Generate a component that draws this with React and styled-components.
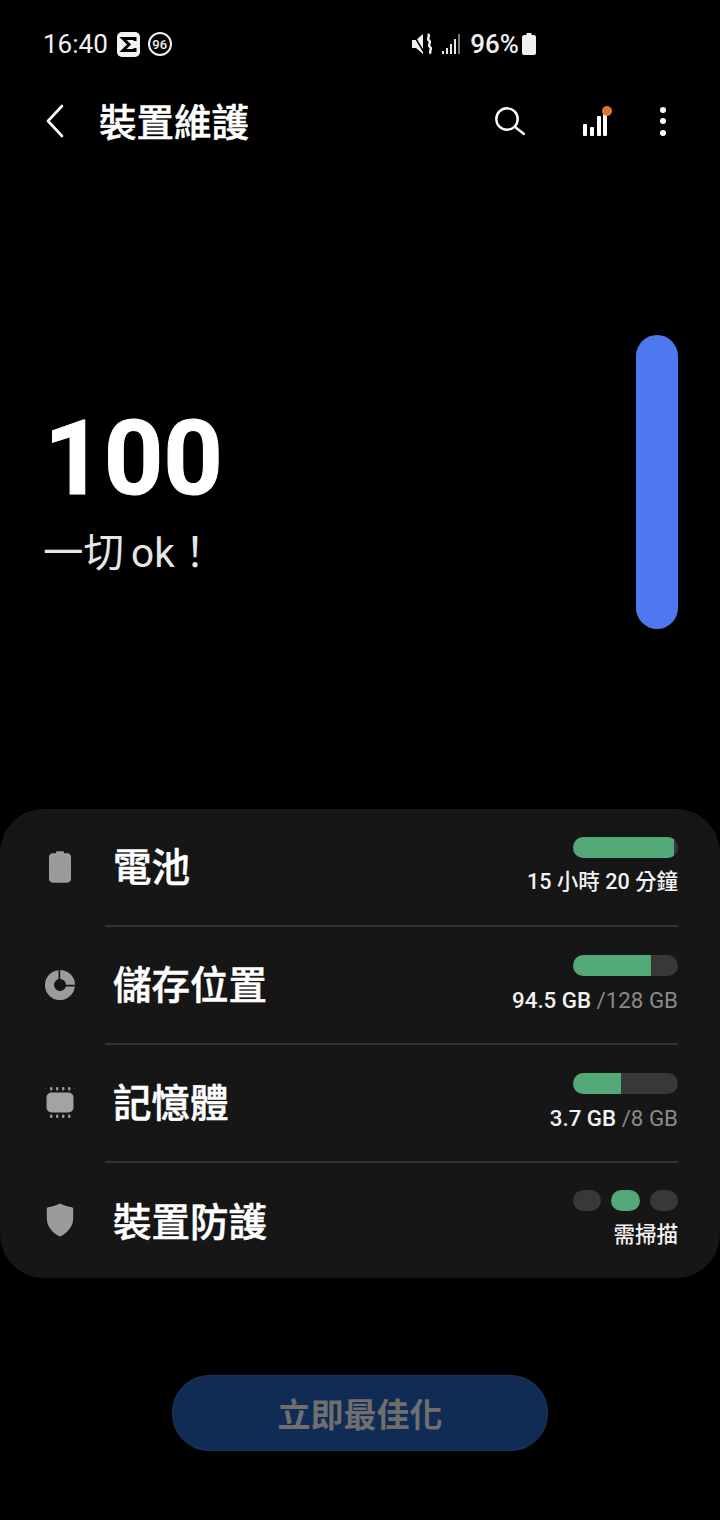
import React from 'react'
import styled, { createGlobalStyle } from 'styled-components'

const GlobalStyle = createGlobalStyle`
  html, body {
    margin: 0;
    padding: 0;
    background: #000;
  }
  body {
    font-family: Roboto, "Noto Sans CJK TC", sans-serif;
    color: #fff;
  }
`

const items = [
  { name: '電池', icon: 'battery', bar: 96, main: '15 小時 20 分鐘', small: true },
  { name: '儲存位置', icon: 'storage', bar: 74, main: '94.5 GB', sub: '/128 GB' },
  { name: '記憶體', icon: 'memory', bar: 46, main: '3.7 GB', sub: '/8 GB' },
  { name: '裝置防護', icon: 'shield', main: '需掃描', small: true },
]

const RowIcon = ({ type }) => {
  if (type === 'battery') {
    return (
      <svg width="30" height="36" viewBox="0 0 30 36">
        <path fill="#9b9b9b" d="M11 3.300c0-.6.5-1 1-1h6c.5 0 1 .4 1 1v1h3.400c2 0 3.600 1.500 3.600 3.600v22.200c0 2-1.600 3.600-3.600 3.600H7.600c-2 0-3.600-1.600-3.600-3.600V7.900c0-2.100 1.600-3.600 3.600-3.600H11z" />
      </svg>
    )
  }
  if (type === 'storage') {
    return (
      <svg width="30" height="30" viewBox="0 0 30 30">
        <path fill="#9b9b9b" d="M13.500.2v8.900a6 6 0 1 0 7.400 7.300h8.900A15 15 0 1 1 13.500.2z" />
        <path fill="#9b9b9b" d="M15.200 0A15 15 0 0 1 30 14.700h-9a6 6 0 0 0-5.800-5.700z" />
      </svg>
    )
  }
  if (type === 'memory') {
    return (
      <svg width="30" height="32" viewBox="0 0 30 32">
        <rect x="1.500" y="5.500" width="27" height="20" rx="5" fill="#a3a3a3" />
        <g fill="#9b9b9b">
          {[5, 11, 17, 23].map((x) => (
            <React.Fragment key={x}>
              <rect x={x} y="0" width="2.400" height="3.400" rx="1" />
              <rect x={x} y="27.600" width="2.400" height="3.400" rx="1" />
            </React.Fragment>
          ))}
        </g>
      </svg>
    )
  }
  return (
    <svg width="30" height="34" viewBox="0 0 30 34">
      <path fill="#9b9b9b" d="M15 .8c1 0 1.600.5 2.600.9 2.600 1 6.300 2 9.200 2.500 1 .2 1.400.7 1.400 1.700v9.600c0 7.500-5 13.600-12 17.500-.5.300-1.900.300-2.400 0-7-3.900-12-10-12-17.500V5.900c0-1 .4-1.500 1.400-1.700 2.900-.5 6.600-1.500 9.200-2.500 1-.4 1.600-.9 2.600-.9z" />
    </svg>
  )
}

const App = () => {
  return (
    <Page>
      <GlobalStyle />
      <StatusBar>
        <StatusGroup>
          <Clock>16:40</Clock>
          <svg width="23" height="25" viewBox="0 0 23 25">
            <rect width="23" height="25" rx="5" fill="#f2f2f2" />
            <path fill="none" stroke="#000" strokeWidth="3" d="M18 9V6.500H6l6 6-6 6h12V16" />
          </svg>
          <CircleBadge>96</CircleBadge>
        </StatusGroup>
        <StatusRight>
          <svg width="21" height="22" viewBox="0 0 21 22">
            <path fill="#f0f0f0" d="M0 7h4l7-6v20l-7-6H0z" />
            <path stroke="#000" strokeWidth="1.500" d="M1 1l12 20" />
            <path fill="none" stroke="#f0f0f0" strokeWidth="2.400" d="M16 1c3 2.500-2 4 1 6.500s-2 4 1 6.500-2 4 1 6.500" />
          </svg>
          <svg width="20" height="22" viewBox="0 0 20 22">
            <g fill="#e8e8e8">
              <rect x="1" y="18" width="2" height="3" />
              <rect x="5" y="15" width="2" height="6" />
              <rect x="9" y="11" width="2" height="10" />
              <rect x="13" y="6" width="2" height="15" />
            </g>
            <rect x="17" y="1" width="2" height="20" fill="#777" />
          </svg>
          <Percent>96%</Percent>
          <svg width="14" height="22" viewBox="0 0 14 22">
            <path fill="#f0f0f0" d="M4.500 0h5v2H12c1 0 2 1 2 2v16c0 1-1 2-2 2H2c-1 0-2-1-2-2V4c0-1 1-2 2-2h2.500z" />
          </svg>
        </StatusRight>
      </StatusBar>

      <Header>
        <BackButton>
          <svg width="18" height="34" viewBox="0 0 18 34">
            <path fill="none" stroke="#fff" strokeWidth="2.600" strokeLinecap="round" strokeLinejoin="round" d="M16 2L2 17l14 15" />
          </svg>
        </BackButton>
        <Title>裝置維護</Title>
        <Actions>
          <SearchIcon width="30" height="28" viewBox="0 0 30 28">
            <circle cx="12" cy="12" r="10.700" fill="none" stroke="#fff" strokeWidth="2.400" />
            <path stroke="#fff" strokeWidth="2.400" strokeLinecap="round" d="M20 20l9 7" />
          </SearchIcon>
          <svg width="30" height="30" viewBox="0 0 30 30">
            <g fill="#fff">
              <rect x="1" y="18" width="4" height="12" rx="1" />
              <rect x="8" y="21" width="4" height="9" rx="1" />
              <rect x="15" y="10" width="4" height="20" rx="1" />
              <rect x="21" y="4" width="4" height="26" rx="1" />
            </g>
            <circle cx="25" cy="5" r="5" fill="#e2743a" />
          </svg>
          <Dots>
            <i />
            <i />
            <i />
          </Dots>
        </Actions>
      </Header>

      <Hero>
        <Score>
          <Number>100</Number>
          <Caption>一切 ok！</Caption>
        </Score>
        <Gauge />
      </Hero>

      <Card>
        {items.map((item, i) => (
          <Row key={item.name} $last={i === items.length - 1}>
            <IconCell>
              <RowIcon type={item.icon} />
            </IconCell>
            <RowBody $last={i === items.length - 1}>
              <RowName>{item.name}</RowName>
              <RowStatus $last={i === items.length - 1}>
                {item.bar ? (
                  <Track>
                    <Fill style={{ width: `${item.bar}%` }} />
                  </Track>
                ) : (
                  <Pills>
                    <Pill />
                    <Pill $on />
                    <Pill />
                  </Pills>
                )}
                <Reading $small={item.small}>
                  {item.main}
                  {item.sub && <Muted> {item.sub}</Muted>}
                </Reading>
              </RowStatus>
            </RowBody>
          </Row>
        ))}
      </Card>

      <Footer>
        <OptimizeButton>立即最佳化</OptimizeButton>
      </Footer>
    </Page>
  )
}

const Page = styled.div`
  width: 720px;
  height: 1520px;
  background: #000;
  display: flex;
  flex-direction: column;
  overflow: hidden;
`

const StatusBar = styled.div`
  height: 88px;
  padding: 0 184px 0 43px;
  display: flex;
  align-items: center;
  justify-content: space-between;
  color: #f0f0f0;
`

const StatusGroup = styled.div`
  display: flex;
  align-items: center;
  gap: 8px;
`

const StatusRight = styled(StatusGroup)`
  gap: 8px;
`

const Clock = styled.span`
  font-size: 26px;
  margin-right: 1px;
`

const CircleBadge = styled.span`
  width: 20px;
  height: 20px;
  border: 2px solid #f0f0f0;
  border-radius: 50%;
  font-size: 13px;
  font-weight: 500;
  display: flex;
  align-items: center;
  justify-content: center;
`

const Percent = styled.span`
  font-size: 26px;
  font-weight: 500;
  margin: 0 -5px 0 1px;
`

const Header = styled.div`
  height: 66px;
  padding: 0 54px 0 46px;
  display: flex;
  align-items: center;
`

const BackButton = styled.div`
  width: 53px;
  display: flex;
`

const Title = styled.h1`
  margin: 0 0 4px;
  font-family: "Noto Sans CJK TC", sans-serif;
  font-size: 37.500px;
  font-weight: 500;
  -webkit-text-stroke: 0.5px #fff;
`

const Actions = styled.div`
  margin-left: auto;
  display: flex;
  align-items: center;
  gap: 48px;
`

const SearchIcon = styled.svg`
  margin-right: 9px;
`

const Dots = styled.div`
  display: flex;
  flex-direction: column;
  gap: 5.500px;
  i {
    width: 6px;
    height: 6px;
    border-radius: 50%;
    background: #fff;
  }
`

const Hero = styled.div`
  height: 655px;
  padding: 181px 42px 0 43px;
  box-sizing: border-box;
  display: flex;
  justify-content: space-between;
  align-items: flex-start;
`

const Score = styled.div`
  display: flex;
  flex-direction: column;
  margin-top: 72px;
`

const Number = styled.div`
  font-size: 104px;
  font-weight: 700;
  line-height: 104px;
  margin-left: 1px;
  -webkit-text-stroke: 1px #fff;
`

const Caption = styled.div`
  font-size: 40.500px;
  font-weight: 400;
  line-height: 56px;
  margin-top: 14px;
  word-spacing: -3px;
  color: #e6e6e6;
`

const Gauge = styled.div`
  width: 42px;
  height: 294px;
  border-radius: 21px;
  background: #4d78f0;
`

const Card = styled.div`
  background: #161616;
  border-radius: 44px;
  height: 469px;
  display: flex;
  flex-direction: column;
`

const Row = styled.div`
  flex: ${(p) => (p.$last ? '0 0 117px' : '0 0 118px')};
  display: flex;
`

const IconCell = styled.div`
  width: 105px;
  padding: 0 0 3px 45px;
  box-sizing: border-box;
  display: flex;
  align-items: center;
`

const RowBody = styled.div`
  flex: 1;
  margin-right: 42px;
  border-bottom: ${(p) => (p.$last ? 'none' : '2px solid #333')};
  display: flex;
  align-items: center;
  justify-content: space-between;
`

const RowName = styled.div`
  font-family: "Noto Sans CJK TC", sans-serif;
  font-size: 38.500px;
  font-weight: 500;
  margin-left: 8px;
  padding-bottom: 6px;
  -webkit-text-stroke: 0.5px #fff;
`

const RowStatus = styled.div`
  display: flex;
  flex-direction: column;
  align-items: flex-end;
  gap: 8px;
  padding-bottom: ${(p) => (p.$last ? '3px' : '0')};
`

const Track = styled.div`
  width: 105px;
  height: 21px;
  border-radius: 11px;
  background: #383838;
  overflow: hidden;
`

const Fill = styled.div`
  height: 100%;
  background: #52a877;
`

const Pills = styled.div`
  display: flex;
  gap: 10px;
`

const Pill = styled.div`
  width: 28.500px;
  height: 21px;
  border-radius: 11px;
  background: ${(p) => (p.$on ? '#52a877' : '#383838')};
`

const Reading = styled.div`
  font-size: ${(p) => (p.$small ? '21.500px' : '22.300px')};
  font-weight: 500;
  line-height: 32px;
  color: #f2f2f2;
`

const Muted = styled.span`
  font-weight: 400;
  color: #8a8a8a;
`

const Footer = styled.div`
  flex: 1;
  display: flex;
  justify-content: center;
  padding-top: 97px;
`

const OptimizeButton = styled.div`
  width: 374px;
  height: 74px;
  border-radius: 37px;
  background: #102c55;
  border: 1px solid #1e3555;
  color: #6f6f6f;
  font-family: "Noto Sans CJK TC", sans-serif;
  font-size: 33px;
  font-weight: 700;
  display: flex;
  align-items: center;
  justify-content: center;
`

export default App
